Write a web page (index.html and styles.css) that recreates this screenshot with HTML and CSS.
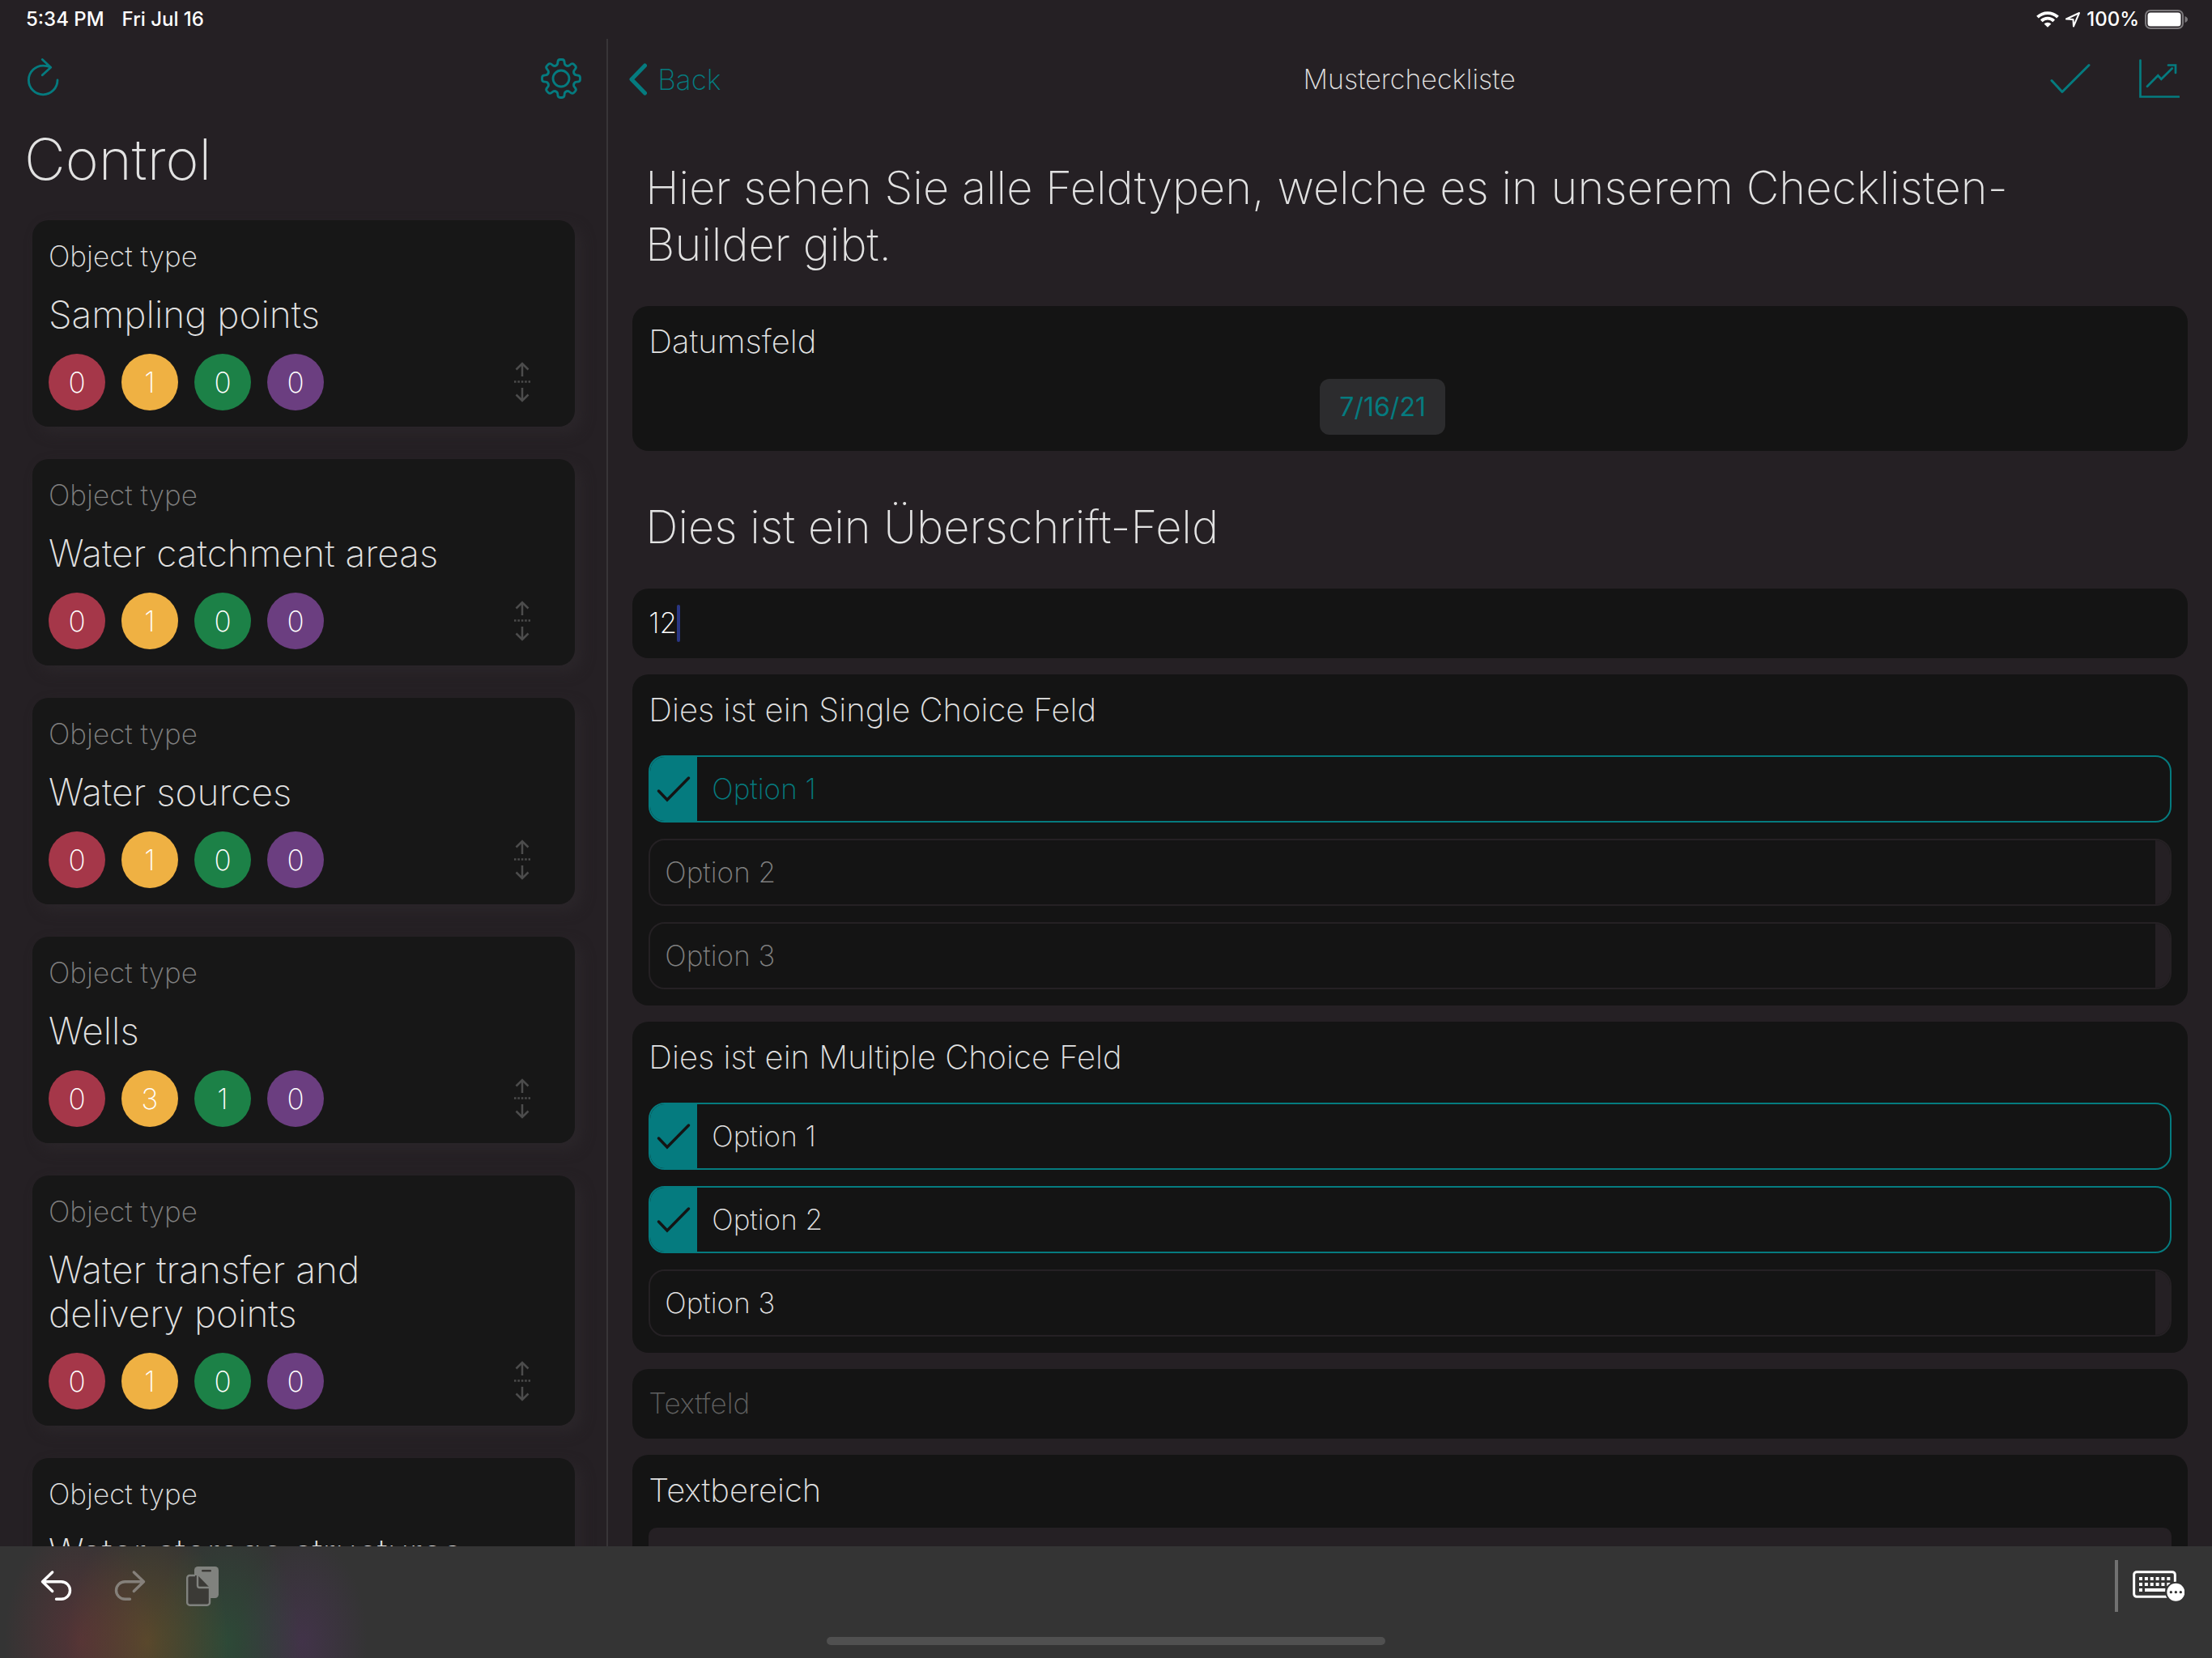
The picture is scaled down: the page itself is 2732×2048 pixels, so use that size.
FILE: index.html
```
<!DOCTYPE html>
<html lang="de">
<head>
<meta charset="utf-8">
<meta name="viewport" content="width=device-width, initial-scale=1">
<title>Mustercheckliste</title>
<link rel="stylesheet" href="styles.css">
</head>
<body>
<svg class="sprite" aria-hidden="true">
  <symbol id="sort" viewBox="0 0 50 50">
    <path d="M25 18V2M17.500 9.500L25 2l7.500 7.500M25 32v16M17.500 40.500L25 48l7.500-7.500" fill="none" stroke="currentColor" stroke-width="2.500"/>
    <path d="M15 24.500h20" stroke="currentColor" stroke-width="2.500" stroke-dasharray="2.500 1.900"/>
  </symbol>
  <symbol id="undo" viewBox="0 0 40 50">
    <path d="M14.700 8L2.500 19.700l12.200 11.800M2.500 19.700h23.200a10.800 10.800 0 0 1 0 21.600h-6.200" fill="none" stroke="currentColor" stroke-width="3.400" stroke-linecap="round" stroke-linejoin="round"/>
  </symbol>
  <path id="tooth" d="M-6.600-15.900Q-4.200-16.800-4.200-19.500Q-4.200-23.500-1.200-23.500H1.200Q4.200-23.500 4.200-19.500Q4.200-16.800 6.600-15.900"/>
</svg>

<header class="status">
  <span>5:34 PM</span>
  <span>Fri Jul 16</span>
  <div class="status-right">
    <svg width="28" height="20" viewBox="0 0 28 20"><g fill="none" stroke="#fff" stroke-width="3.800"><path d="M1.500 7.200a17.700 17.700 0 0 1 25 0"/><path d="M6.300 11.800a11 11 0 0 1 15.400 0"/></g><path d="M14 19.800l-4.400-4.300a6.400 6.400 0 0 1 8.800 0z" fill="#fff"/></svg>
    <svg width="20" height="20" viewBox="0 0 20 20"><path d="M2 9.500L18 2L11 18.500L10.500 10z" fill="none" stroke="#fff" stroke-width="2" stroke-linejoin="round"/></svg>
    <span>100%</span>
    <svg width="53" height="24" viewBox="0 0 53 24"><rect x="1" y="1" width="46" height="22" rx="6" fill="none" stroke="#7c797c" stroke-width="2"/><rect x="3.500" y="3.500" width="41" height="17" rx="3.500" fill="#fff"/><path d="M49.500 8q3.500 1.500 3.500 4t-3.500 4z" fill="#7c797c"/></svg>
  </div>
</header>

<div class="split">
  <aside class="sidebar">
    <div class="side-nav">
      <button class="icon-btn" aria-label="Refresh"><svg width="42" height="50" viewBox="0 0 42 50"><path d="M39 27A17.800 17.800 0 1 1 21.300 9.200Q26 9.200 30.500 11M20.300 1.500L30.700 11.200L20.300 20.700" fill="none" stroke="currentColor" stroke-width="2.800" stroke-linecap="round" stroke-linejoin="round"/></svg></button>
      <button class="icon-btn" aria-label="Settings"><svg width="50" height="50" viewBox="-25 -25 50 50"><g fill="none" stroke="currentColor" stroke-width="2.800" stroke-linecap="round"><circle r="10"/><use href="#tooth"/><use href="#tooth" transform="rotate(45)"/><use href="#tooth" transform="rotate(90)"/><use href="#tooth" transform="rotate(135)"/><use href="#tooth" transform="rotate(180)"/><use href="#tooth" transform="rotate(225)"/><use href="#tooth" transform="rotate(270)"/><use href="#tooth" transform="rotate(315)"/></g></svg></button>
    </div>
    <h1>Control</h1>
    <ul class="cards">
      <li class="card first"><p class="kind">Object type</p><h2>Sampling points</h2>
        <div class="counts"><span class="red">0</span><span class="amber">1</span><span class="green">0</span><span class="purple">0</span><svg class="sort"><use href="#sort"/></svg></div></li>
      <li class="card"><p class="kind">Object type</p><h2>Water catchment areas</h2>
        <div class="counts"><span class="red">0</span><span class="amber">1</span><span class="green">0</span><span class="purple">0</span><svg class="sort"><use href="#sort"/></svg></div></li>
      <li class="card"><p class="kind">Object type</p><h2>Water sources</h2>
        <div class="counts"><span class="red">0</span><span class="amber">1</span><span class="green">0</span><span class="purple">0</span><svg class="sort"><use href="#sort"/></svg></div></li>
      <li class="card"><p class="kind">Object type</p><h2>Wells</h2>
        <div class="counts"><span class="red">0</span><span class="amber">3</span><span class="green">1</span><span class="purple">0</span><svg class="sort"><use href="#sort"/></svg></div></li>
      <li class="card"><p class="kind">Object type</p><h2>Water transfer and<br>delivery points</h2>
        <div class="counts"><span class="red">0</span><span class="amber">1</span><span class="green">0</span><span class="purple">0</span><svg class="sort"><use href="#sort"/></svg></div></li>
      <li class="card first"><p class="kind">Object type</p><h2>Water storage structures</h2></li>
    </ul>
  </aside>

  <main class="detail">
    <div class="detail-nav">
      <a class="back" href="#"><svg width="22" height="40" viewBox="0 0 22 40"><path d="M19.500 3L3 20l16.500 17" fill="none" stroke="currentColor" stroke-width="5" stroke-linecap="round" stroke-linejoin="round"/></svg>Back</a>
      <span class="title">Mustercheckliste</span>
      <div class="actions">
        <button class="icon-btn" aria-label="Done"><svg width="50" height="50" viewBox="0 0 50 50"><path d="M2 26.500L15 40.500L48 7.500" fill="none" stroke="currentColor" stroke-width="3" stroke-linecap="round" stroke-linejoin="round"/></svg></button>
        <button class="icon-btn" aria-label="Statistics"><svg width="50" height="50" viewBox="0 0 50 50"><path d="M1.500 1.500v45h47.500M10 33.700L23.300 20.300l4 4.400L40.700 11.500M36 7.500h9v9.500" fill="none" stroke="currentColor" stroke-width="2.700" stroke-linecap="round"/></svg></button>
      </div>
    </div>

    <form class="form">
      <h2 class="heading">Hier sehen Sie alle Feldtypen, welche es in unserem Checklisten-<br>Builder gibt.</h2>

      <section class="field">
        <label class="field-title" for="date">Datumsfeld</label>
        <div class="date-row"><input class="date" id="date" type="text" value="7/16/21"></div>
      </section>

      <h2 class="heading">Dies ist ein Überschrift-Feld</h2>

      <label class="field line"><input class="number" type="text" value="12" aria-label="Zahl"><span class="caret"></span></label>

      <fieldset class="field choices single">
        <legend class="field-title">Dies ist ein Single Choice Feld</legend>
        <div class="options">
          <label class="option"><input type="radio" name="single" checked><span>Option 1</span></label>
          <label class="option"><input type="radio" name="single"><span>Option 2</span></label>
          <label class="option"><input type="radio" name="single"><span>Option 3</span></label>
        </div>
      </fieldset>

      <fieldset class="field choices">
        <legend class="field-title">Dies ist ein Multiple Choice Feld</legend>
        <div class="options">
          <label class="option"><input type="checkbox" checked><span>Option 1</span></label>
          <label class="option"><input type="checkbox" checked><span>Option 2</span></label>
          <label class="option"><input type="checkbox"><span>Option 3</span></label>
        </div>
      </fieldset>

      <label class="field line"><input class="text" type="text" placeholder="Textfeld" aria-label="Textfeld"></label>

      <section class="field">
        <label class="field-title" for="area">Textbereich</label>
        <textarea class="area" id="area"></textarea>
      </section>
    </form>
  </main>
</div>

<footer class="toolbar">
  <div class="tools">
    <button class="icon-btn" aria-label="Undo"><svg width="40" height="50"><use href="#undo"/></svg></button>
    <button class="icon-btn dim" aria-label="Redo"><svg class="flip" width="40" height="50"><use href="#undo"/></svg></button>
    <button class="icon-btn dim" aria-label="Paste"><svg width="40" height="50" viewBox="0 0 40 50"><rect x="10" y="1" width="30" height="39" rx="4.500" fill="#80827e"/><rect x="19" y="5" width="12" height="2.600" rx="1.300" fill="#3b3a36"/><path d="M5 12h9.300L29 27v18.500a3.200 3.200 0 0 1-3.200 3.200H4.400a3.200 3.200 0 0 1-3.200-3.200V15.200A3.200 3.200 0 0 1 4.400 12z" fill="#3b3a36"/><path d="M11 12H4.400a3.200 3.200 0 0 0-3.200 3.200v30.300a3.200 3.200 0 0 0 3.200 3.200h21.400a3.200 3.200 0 0 0 3.200-3.200V27H16.500a2.500 2.500 0 0 1-2.500-2.500V12" fill="none" stroke="#80827e" stroke-width="2.400"/></svg></button>
    <span class="divider"></span>
    <button class="icon-btn" aria-label="Keyboard"><svg width="64" height="38" viewBox="0 0 192 114"><rect x="5" y="5" width="152" height="92" rx="10" fill="none" stroke="#fff" stroke-width="9"/><path d="M24 30h120M24 51h120" stroke="#fff" stroke-width="12" stroke-dasharray="12 8.600" fill="none"/><path d="M24 72h12M45 72h76" stroke="#fff" stroke-width="12" fill="none"/><circle cx="160" cy="80" r="39" fill="#343434"/><circle cx="160" cy="80" r="33" fill="#fff"/><g fill="#343434"><circle cx="142" cy="80" r="5"/><circle cx="160" cy="80" r="5"/><circle cx="178" cy="80" r="5"/></g></svg></button>
  </div>
  <div class="home"></div>
</footer>
</body>
</html>
```
FILE: styles.css
```
:root {
  --bg: #252024;
  --card: #141414;
  --teal: #057b7f;
  --text: #e2e2e2;
  --muted: #808080;
}

* { box-sizing: border-box; margin: 0; }

body {
  display: flex;
  flex-direction: column;
  height: 100vh;
  overflow: hidden;
  background: var(--bg);
  color: var(--text);
  font: 200 35px/48px Inter, "Liberation Sans", sans-serif;
}

svg { display: block; flex: none; }
.sprite { position: absolute; width: 0; height: 0; }

h1, h2 { font-weight: 200; }

button, input, textarea { font: inherit; color: inherit; }

.icon-btn {
  padding: 0;
  border: 0;
  background: none;
  color: var(--teal);
}

/* status bar */
.status {
  flex: none;
  display: flex;
  align-items: center;
  gap: 22px;
  height: 48px;
  padding: 0 30px 0 32px;
  color: #fff;
  font-size: 24px;
  font-weight: 500;
}
.status-right {
  display: flex;
  align-items: center;
  gap: 7px;
  margin-left: auto;
}

.split {
  flex: 1;
  display: flex;
  min-height: 0;
}

/* sidebar */
.sidebar {
  flex: none;
  width: 27.5%;
  padding: 0 39px 0 40px;
  overflow: hidden;
  border-right: 2px solid #383538;
}
.side-nav {
  display: flex;
  align-items: center;
  justify-content: space-between;
  height: 98px;
  margin: 0 -8px;
}
.sidebar h1 {
  margin: 11px -10px 35px;
  font-size: 70px;
  line-height: 80px;
}
.cards {
  display: flex;
  flex-direction: column;
  gap: 40px;
  padding: 0;
  list-style: none;
}
.card {
  padding: 20px;
  border-radius: 20px;
  background: #171717;
  box-shadow: 8px 8px 16px #2b262a;
}
.kind { color: var(--muted); }
.first .kind { color: var(--text); }
.card h2 {
  margin: 21px 0 22px;
  font-size: 46px;
  line-height: 54px;
}
.counts {
  display: flex;
  align-items: center;
  gap: 20px;
}
.counts span {
  width: 70px;
  border-radius: 50%;
  color: #fff;
  line-height: 70px;
  text-align: center;
}
.red { background: #a53749; }
.amber { background: #efb143; }
.green { background: #1c8147; }
.purple { background: #6b3e80; }
.sort {
  width: 50px;
  height: 50px;
  margin: 0 20px 0 auto;
  color: #4c4c4c;
}

/* detail */
.detail {
  flex: 1;
  min-width: 0;
  overflow: hidden;
}
.detail-nav {
  display: grid;
  grid-template-columns: 1fr auto 1fr;
  align-items: center;
  height: 100px;
  padding: 0 40px 0 26px;
}
.back {
  display: flex;
  align-items: center;
  gap: 13px;
  color: var(--teal);
  text-decoration: none;
}
.title {
  margin-left: 12px;
  font-size: 34px;
}
.actions {
  display: flex;
  justify-content: flex-end;
  gap: 60px;
}

.form {
  display: flex;
  flex-direction: column;
  gap: 20px;
  padding: 10px 30px 0;
}
.heading {
  padding: 39px 16px 21px;
  font-size: 56px;
  line-height: 70px;
}
.field {
  display: block;
  min-width: 0;
  padding: 20px;
  border: 0;
  border-radius: 20px;
  background: var(--card);
}
.field-title {
  display: block;
  font-size: 40px;
}
.date-row {
  display: flex;
  justify-content: center;
  margin-top: 22px;
  padding-right: 68px;
}
.date {
  width: 155px;
  height: 69px;
  padding: 0;
  border: 0;
  border-radius: 12px;
  background: #2c2c2e;
  color: var(--teal);
  font-size: 32px;
  font-weight: 400;
  text-align: center;
}

.line {
  display: flex;
  align-items: center;
  height: 86px;
}
.line input {
  padding: 0 0 2px;
  border: 0;
  outline: 0;
  background: none;
}
.number { field-sizing: content; color: #fff; }
.text { flex: 1; }
.text::placeholder { color: #606060; opacity: 1; }
.caret {
  width: 4px;
  height: 46px;
  border-radius: 2px;
  background: #2a3684;
}

.choices legend {
  float: left;
  width: 100%;
  padding: 0 0 32px;
}
.options {
  clear: both;
  display: flex;
  flex-direction: column;
  gap: 20px;
}
.option {
  display: flex;
  align-items: center;
  height: 83px;
  overflow: hidden;
  border: 2px solid #252124;
  border-radius: 20px;
}
.option span {
  flex: 1;
  padding: 0 0 2px 18px;
}
.option input {
  appearance: none;
  order: 2;
  width: 18px;
  height: 100%;
  margin: 0;
  background: var(--bg);
}
.option:has(:checked) { border-color: var(--teal); }
.option input:checked {
  order: 0;
  width: 58px;
  background: var(--teal) url("data:image/svg+xml,%3Csvg xmlns='http://www.w3.org/2000/svg' width='58' height='79'%3E%3Cpath d='M10.500 42L21 53L47.500 26' fill='none' stroke='%23141414' stroke-width='3.500' stroke-linecap='round'/%3E%3C/svg%3E") center no-repeat;
}
.single .option { color: var(--muted); }
.single .option:has(:checked) { color: var(--teal); }

.area {
  display: block;
  width: 100%;
  height: 240px;
  margin-top: 22px;
  border: 0;
  border-radius: 10px;
  background: var(--bg);
  resize: none;
}

.toolbar {
  flex: none;
  height: 138px;
  background:
    radial-gradient(95px 150px at 100px 118px, rgba(130, 50, 58, .4), transparent),
    radial-gradient(100px 150px at 182px 118px, rgba(140, 105, 30, .4), transparent),
    radial-gradient(90px 150px at 280px 118px, rgba(35, 105, 60, .4), transparent),
    radial-gradient(80px 130px at 374px 118px, rgba(90, 50, 110, .36), transparent),
    #343434;
}
.tools {
  display: flex;
  align-items: center;
  gap: 50px;
  height: 98px;
  padding: 0 34px 0 50px;
}
.tools .icon-btn { color: #fff; }
.tools .dim { color: #85807a; }
.flip { transform: scaleX(-1); }
.divider {
  width: 4px;
  height: 64px;
  margin: 0 -32px 0 auto;
  background: #717171;
}
.home {
  width: 690px;
  height: 10px;
  margin: 14px auto 0;
  border-radius: 5px;
  background: #505050;
}
```
